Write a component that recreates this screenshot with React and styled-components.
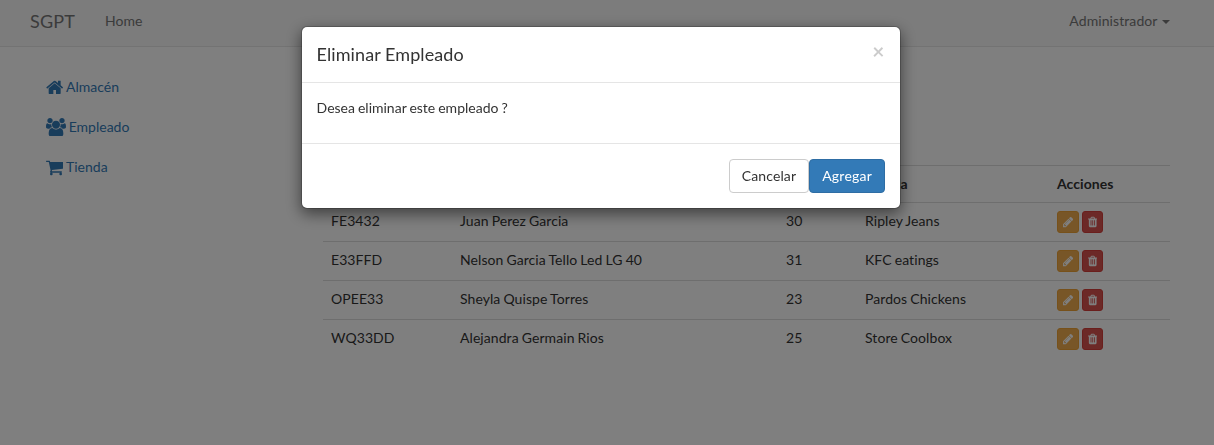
import React from "react";
import styled, { createGlobalStyle } from "styled-components";

const GlobalStyle = createGlobalStyle`
  *, *::before, *::after { box-sizing: border-box; }
  html, body { margin: 0; height: 100%; overflow: hidden; }
  body {
    background: #fff;
    color: #333;
    font-family: Lato, "Liberation Sans", sans-serif;
    font-size: 14px;
    line-height: 20px;
  }
  button { font: inherit; cursor: pointer; }
  a { text-decoration: none; }
`;

const icons = {
  home: {
    viewBox: "64 0 1664 1792",
    d: "M1472 992v480q0 26-19 45t-45 19h-384v-384h-256v384h-384q-26 0-45-19t-19-45v-480q0-1 .5-3t.5-3l575-474 575 474q1 2 1 6zm223-69l-62 74q-8 9-21 11h-3q-13 0-21-7l-692-577-692 577q-12 8-24 7-13-2-21-11l-62-74q-8-10-7-23.5t11-21.5l719-599q32-26 76-26t76 26l244 204v-195q0-14 9-23t23-9h192q14 0 23 9t9 23v408l219 182q10 8 11 21.5t-7 23.5z",
    ratio: 1664 / 1792,
  },
  users: {
    viewBox: "-64 0 1920 1792",
    d: "M529 896q-162 5-265 128h-134q-82 0-138-40.5t-56-118.5q0-353 124-353 6 0 43.5 21t97.5 42.5 119 21.5q67 0 133-23-5 37-5 66 0 139 81 256zm1071 637q0 120-73 189.5t-194 69.5h-874q-121 0-194-69.5t-73-189.5q0-53 3.5-103.5t14-109 26.5-108.5 43-97.5 62-81 85.5-53.5 111.5-20q10 0 43 21.5t73 48 107 48 135 21.5 135-21.5 107-48 73-48 43-21.5q61 0 111.5 20t85.5 53.5 62 81 43 97.5 26.5 108.5 14 109 3.5 103.5zm-1024-1277q0 106-75 181t-181 75-181-75-75-181 75-181 181-75 181 75 75 181zm704 384q0 159-112.5 271.5t-271.5 112.5-271.5-112.5-112.5-271.5 112.5-271.5 271.5-112.5 271.5 112.5 112.5 271.5zm576 225q0 78-56 118.5t-138 40.5h-134q-103-123-265-128 81-117 81-256 0-29-5-66 66 23 133 23 59 0 119-21.5t97.5-42.5 43.5-21q124 0 124 353zm-128-609q0 106-75 181t-181 75-181-75-75-181 75-181 181-75 181 75 75 181z",
    ratio: 1920 / 1792,
  },
  cart: {
    viewBox: "64 0 1664 1792",
    d: "M704 1536q0 52-38 90t-90 38-90-38-38-90 38-90 90-38 90 38 38 90zm896 0q0 52-38 90t-90 38-90-38-38-90 38-90 90-38 90 38 38 90zm128-1088v512q0 24-16.5 42.5t-40.5 21.5l-1044 122q13 60 13 70 0 16-24 64h920q26 0 45 19t19 45-19 45-45 19h-1024q-26 0-45-19t-19-45q0-11 8-31.5t16-36 21.5-40 15.5-29.5l-177-823h-204q-26 0-45-19t-19-45 19-45 45-19h256q16 0 28.5 6.5t19.5 15.5 13 24.5 8 26 5.5 29.5 4.5 26h1201q26 0 45 19t19 45z",
    ratio: 1664 / 1792,
  },
  pencil: {
    viewBox: "128 0 1536 1792",
    d: "M491 1536l91-91-235-235-91 91v107h128v128h107zm523-928q0-22-22-22-10 0-17 7l-542 542q-7 7-7 17 0 22 22 22 10 0 17-7l542-542q7-7 7-17zm-54-192l416 416-832 832h-416v-416zm683 96q0 53-37 90l-166 166-416-416 166-165q36-38 90-38 53 0 91 38l235 234q37 39 37 91z",
    ratio: 1536 / 1792,
  },
  trash: {
    viewBox: "192 0 1408 1792",
    d: "M704 1376v-704q0-14-9-23t-23-9h-64q-14 0-23 9t-9 23v704q0 14 9 23t23 9h64q14 0 23-9t9-23zm256 0v-704q0-14-9-23t-23-9h-64q-14 0-23 9t-9 23v704q0 14 9 23t23 9h64q14 0 23-9t9-23zm256 0v-704q0-14-9-23t-23-9h-64q-14 0-23 9t-9 23v704q0 14 9 23t23 9h64q14 0 23-9t9-23zm-544-992h448l-48-117q-7-9-17-11h-317q-10 2-17 11zm928 32v64q0 14-9 23t-23 9h-96v948q0 83-47 143.5t-113 60.5h-832q-66 0-113-58.5t-47-141.5v-952h-96q-14 0-23-9t-9-23v-64q0-14 9-23t23-9h309l70-167q15-37 54-63t79-26h320q40 0 79 26t54 63l70 167h309q14 0 23 9t9 23z",
    ratio: 1408 / 1792,
  },
};

const IconSvg = styled.svg`
  display: block;
  flex: none;
  width: ${(p) => p.$size * p.$ratio}px;
  height: ${(p) => p.$size}px;
  fill: currentColor;
`;

function Icon({ name, size }) {
  const { viewBox, d, ratio } = icons[name];
  return (
    <IconSvg viewBox={viewBox} $size={size} $ratio={ratio} aria-hidden="true">
      <path d={d} />
    </IconSvg>
  );
}

const Navbar = styled.nav`
  display: flex;
  align-items: flex-start;
  height: 47px;
  padding: 11px 44px 0 30px;
  background: #f8f8f8;
  border-bottom: 1px solid #e7e7e7;
  color: #777;
`;

const Brand = styled.a`
  font-size: 18px;
  letter-spacing: 0.15px;
  margin-right: 30px;
`;

const NavLink = styled.a`
  display: flex;
  align-items: center;
  letter-spacing: 0.08px;
`;

const UserMenu = styled(NavLink)`
  margin-left: auto;
`;

const Caret = styled.span`
  margin-left: 4.5px;
  margin-top: 2px;
  border: 4px solid transparent;
  border-top-color: currentColor;
  border-bottom: 0;
`;

const Content = styled.div`
  display: flex;
  padding-right: 44px;
`;

const Sidebar = styled.ul`
  width: 323px;
  margin: 0;
  padding: 20px 0 0 46px;
  list-style: none;
`;

const SideLink = styled.a`
  display: flex;
  align-items: center;
  gap: 2.7px;
  height: 40px;
  color: #337ab7;
`;

const Main = styled.main`
  flex: 1;
  padding-top: 118px;
`;

const Table = styled.table`
  width: 100%;
  table-layout: fixed;
  border-collapse: separate;
  border-spacing: 0;
  letter-spacing: 0.07px;
  word-spacing: -0.6px;
`;

const Col = styled.col`
  width: ${(p) => p.$width}px;
`;

const HeadCell = styled.th`
  padding: 8px;
  border-top: 1px solid #ddd;
  text-align: left;
  font-weight: 700;
`;

const Cell = styled.td`
  height: 39px;
  padding: 8px;
  border-top: 1px solid #ddd;
  vertical-align: top;
`;

const Actions = styled.div`
  display: flex;
  gap: 2.7px;
`;

const ActionButton = styled.button`
  display: flex;
  align-items: center;
  height: 22px;
  padding: 0 5px;
  border: 1px solid ${(p) => (p.$danger ? "#d43f3a" : "#eea236")};
  border-radius: 3px;
  background: ${(p) => (p.$danger ? "#d9534f" : "#f0ad4e")};
  color: #fff;
`;

const Backdrop = styled.div`
  position: fixed;
  inset: 0;
  display: flex;
  justify-content: center;
  align-items: flex-start;
  padding: 26px 12px 0 0;
  background: rgba(0, 0, 0, 0.5);
`;

const Dialog = styled.div`
  width: 600px;
  background: #fff;
  background-clip: padding-box;
  border: 1px solid rgba(0, 0, 0, 0.2);
  border-radius: 6px;
  box-shadow: 0 5px 15px rgba(0, 0, 0, 0.5);
`;

const DialogHeader = styled.header`
  display: flex;
  justify-content: space-between;
  align-items: flex-start;
  height: 56px;
  padding: 15px 15.5px 15px 14.6px;
  border-bottom: 1px solid #e5e5e5;
`;

const DialogTitle = styled.h4`
  margin: 0;
  font-size: 18px;
  font-weight: 400;
  line-height: 25.7px;
  letter-spacing: 0.08px;
`;

const CloseButton = styled.button`
  margin-top: -2px;
  padding: 0;
  border: 0;
  background: none;
  color: #000;
  font-size: 21px;
  font-weight: 700;
  line-height: 21px;
  text-shadow: 0 1px 0 #fff;
  opacity: 0.2;
`;

const DialogBody = styled.div`
  height: 60px;
  padding: 15px 14.6px;
  word-spacing: -0.6px;
`;

const DialogFooter = styled.footer`
  display: flex;
  justify-content: flex-end;
  padding: 15px;
  border-top: 1px solid #e5e5e5;
`;

const Button = styled.button`
  height: 34px;
  padding: 0 12px;
  border: 1px solid ${(p) => (p.$primary ? "#2e6da4" : "#ccc")};
  border-radius: 4px;
  background: ${(p) => (p.$primary ? "#337ab7" : "#fff")};
  color: ${(p) => (p.$primary ? "#fff" : "#333")};
  letter-spacing: ${(p) => (p.$primary ? "0.22px" : "0.12px")};
`;

const links = [
  { icon: "home", label: "Almacén" },
  { icon: "users", label: "Empleado" },
  { icon: "cart", label: "Tienda" },
];

const headers = ["Código", "Nombre", "Edad", "Tienda", "Acciones"];
const widths = [129, 326, 79, 192, 121];

const employees = [
  ["FE3432", "Juan Perez Garcia", 30, "Ripley Jeans"],
  ["E33FFD", "Nelson Garcia Tello Led LG 40", 31, "KFC eatings"],
  ["OPEE33", "Sheyla Quispe Torres", 23, "Pardos Chickens"],
  ["WQ33DD", "Alejandra Germain Rios", 25, "Store Coolbox"],
];

export default function App() {
  return (
    <>
      <GlobalStyle />
      <Navbar>
        <Brand>SGPT</Brand>
        <NavLink>Home</NavLink>
        <UserMenu>
          Administrador
          <Caret />
        </UserMenu>
      </Navbar>
      <Content>
        <Sidebar>
          {links.map((link) => (
            <li key={link.label}>
              <SideLink>
                <Icon name={link.icon} size={18.67} />
                {link.label}
              </SideLink>
            </li>
          ))}
        </Sidebar>
        <Main>
          <Table>
            <colgroup>
              {widths.map((width, i) => (
                <Col key={i} $width={width} />
              ))}
            </colgroup>
            <thead>
              <tr>
                {headers.map((header) => (
                  <HeadCell key={header}>{header}</HeadCell>
                ))}
              </tr>
            </thead>
            <tbody>
              {employees.map((employee) => (
                <tr key={employee[0]}>
                  {employee.map((value, i) => (
                    <Cell key={i}>{value}</Cell>
                  ))}
                  <Cell>
                    <Actions>
                      <ActionButton aria-label="Editar">
                        <Icon name="pencil" size={12} />
                      </ActionButton>
                      <ActionButton $danger aria-label="Eliminar">
                        <Icon name="trash" size={12} />
                      </ActionButton>
                    </Actions>
                  </Cell>
                </tr>
              ))}
            </tbody>
          </Table>
        </Main>
      </Content>
      <Backdrop>
        <Dialog role="dialog" aria-modal="true">
          <DialogHeader>
            <DialogTitle>Eliminar Empleado</DialogTitle>
            <CloseButton aria-label="Cerrar">×</CloseButton>
          </DialogHeader>
          <DialogBody>Desea eliminar este empleado ?</DialogBody>
          <DialogFooter>
            <Button>Cancelar</Button>
            <Button $primary>Agregar</Button>
          </DialogFooter>
        </Dialog>
      </Backdrop>
    </>
  );
}
